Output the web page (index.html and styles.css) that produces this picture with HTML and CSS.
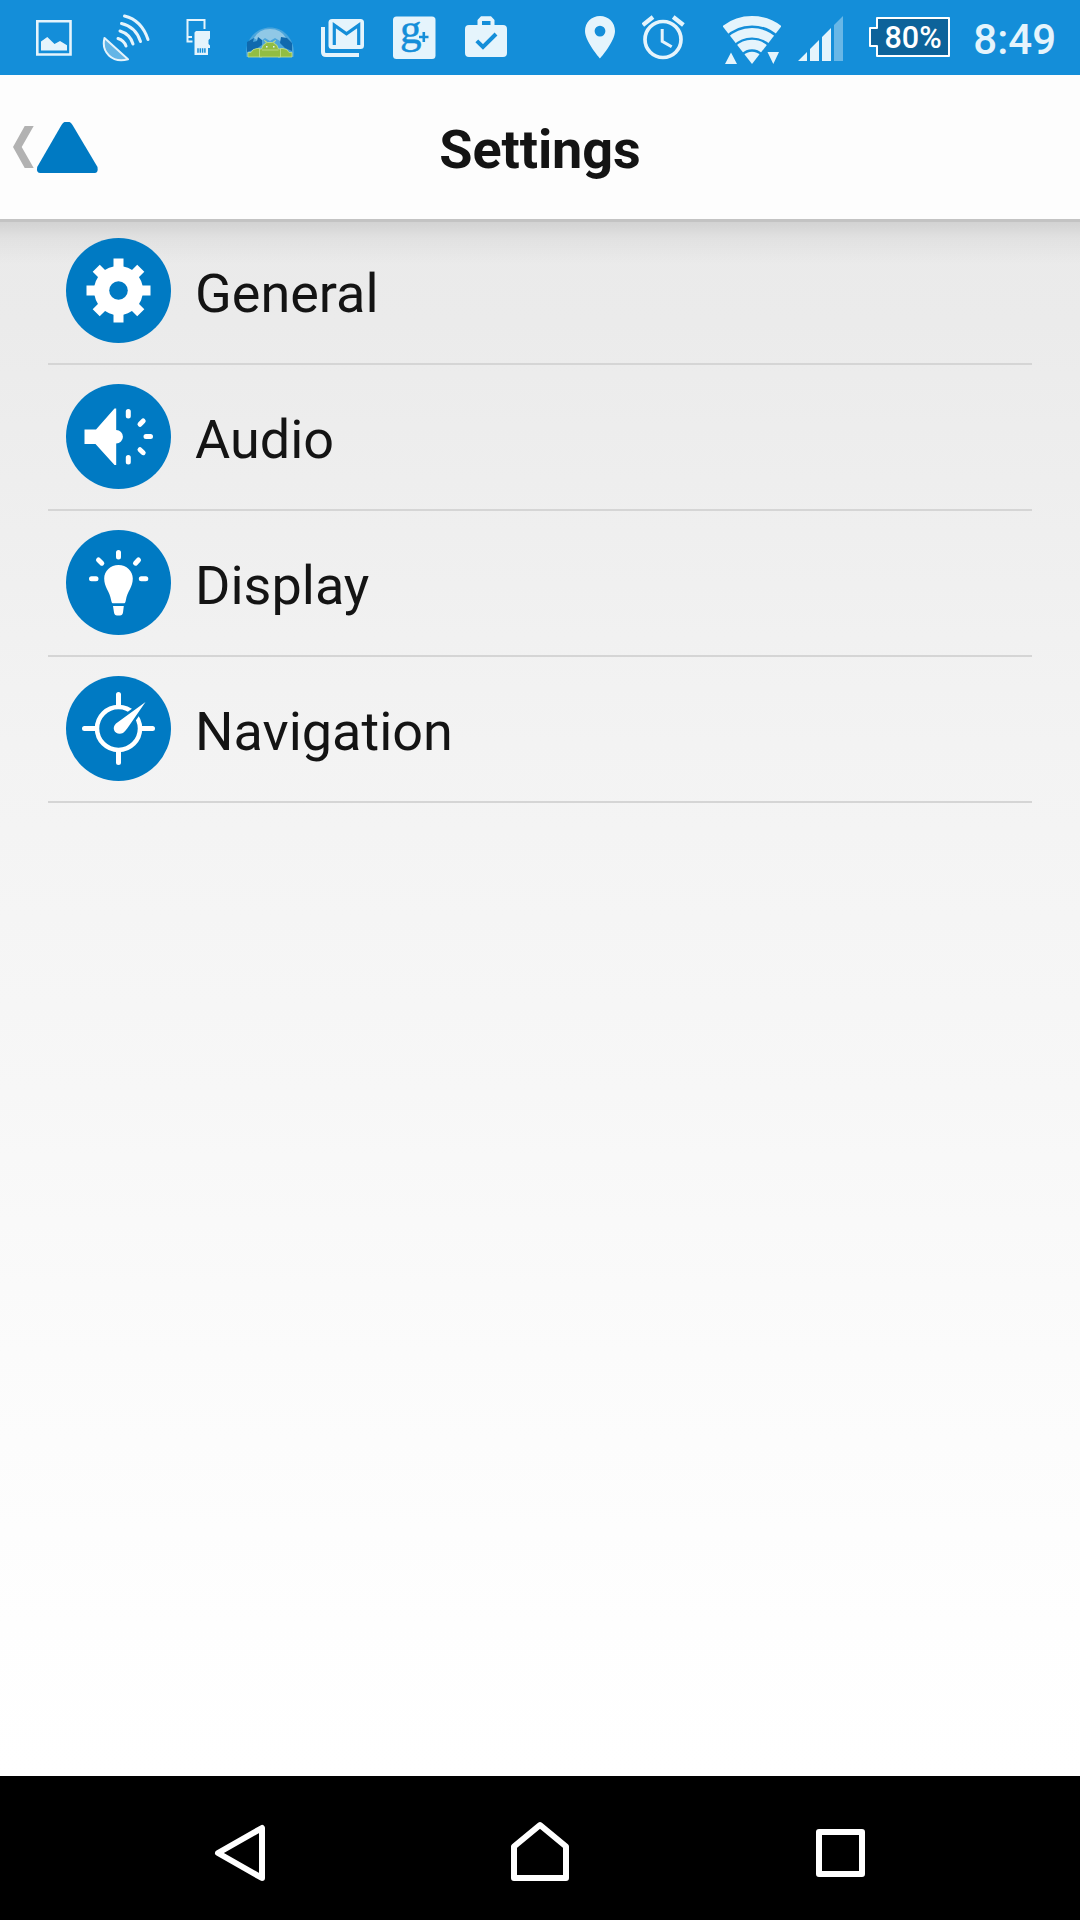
FILE: index.html
```html
<!DOCTYPE html>
<html lang="en">
<head>
<meta charset="utf-8">
<title>Settings</title>
<link rel="stylesheet" href="styles.css">
</head>
<body>
<div class="screen">
  <div class="status-bar">
    <svg class="photo" width="36" height="75" viewBox="36 0 36 75"><path fill="none" stroke="currentColor" stroke-width="2.6" d="M37.300 21.300h33.200v33.200H37.300z"/><path fill="currentColor" d="M41 50.500V41.500L47.300 37l7.200 7 5.500-3 7 4.200v5.300z"/></svg>
    <svg class="dish" width="49" height="75" viewBox="101 0 49 75"><g fill="none" stroke="currentColor" stroke-width="3"><path stroke-width="2" fill="currentColor" fill-opacity=".38" stroke-linejoin="round" d="M104.500 38C101 52 112 63.500 128 59.300Z"/><path stroke-linecap="round" d="M118 38.500q6 2 8 7.500M120 31q10 3 13 13M121.500 23.500q14 3 19 18M124.500 16q17 4 23.500 23.500"/></g></svg>
    <svg class="card" width="24" height="75" viewBox="186 0 24 75"><path fill="none" stroke="currentColor" stroke-width="2" d="M204.500 29v-9h-17v21.500h5M188 37h4"/><path fill="currentColor" d="M196 31h14v7.500l-1.500 1.500v4l1.500 1.500V48h-2v7h-13.500V32.500z"/><path stroke="#148ed9" stroke-width="1.500" d="M198 48.300v4.400M200.300 48.300v4.400M202.600 48.300v4.400M204.900 48.300v4.400"/></svg>
    <svg class="droids" width="48" height="75" viewBox="246 0 48 75"><path fill="#4aa5dc" d="M246.500 57C244 40 256 27.500 270 27.500S296 40 293.500 57z"/><path fill="#90c8e6" d="M254 38q5-9 16-9 11 0 16 9l-6 3-5-3-5 3-5-3-5 4z"/><path fill="#0f69ae" d="M247 52v-10l7-4-1 4 4-1 1-4 4 3v5l-6 4zM280 43l1-6 6 1 5 5v8l-7-3z"/><g fill="#92bd42" stroke="#c3df92" stroke-width=".8"><path d="M248 57v-4.500h3q1-3.500 6-4l3 0 2 8.500zM292 57v-4.500h-3q-1-3.500-6-4l-3 0-2 8.500z"/><path d="M259.500 57v-8h2q1-5 5-6l-2-2.500 3 2h5l3-2-2 2.500q4 1 5 6h2v8z"/></g><path fill="#e5f4fc" d="M266 46h1.500v1.500H266zm7 0h1.500v1.500H273z"/><path stroke="#c3df92" stroke-width=".8" d="M262 50h16.500"/></svg>
    <svg class="mail" width="43" height="75" viewBox="321 0 43 75"><path fill="none" stroke="currentColor" stroke-width="4" d="M323 27v25q0 3 3 3h33"/><rect x="328.500" y="19" width="35.500" height="30" rx="3.500" fill="currentColor"/><path fill="none" stroke="#148ed9" stroke-width="3.200" d="M334.300 45V25.200L346.500 33.800 358.700 25.200V45"/></svg>
    <svg class="plus" width="43" height="75" viewBox="393 0 43 75"><rect x="393" y="16.500" width="42.500" height="42.500" rx="3.500" fill="currentColor"/><text class="plus-g" x="400" y="43">g</text><path stroke="#148ed9" stroke-width="2.600" d="M419 37h9.500M423.800 32v10"/></svg>
    <svg class="bag" width="42" height="75" viewBox="465 0 42 75"><path fill="currentColor" fill-rule="evenodd" d="M469 25h8.500v-5l3.500-3.700h10l3.500 3.700v5h8.500q4 0 4 4v24q0 4-4 4h-34q-4 0-4-4V29q0-4 4-4zm13 0h8.500v-4H482z"/><path fill="none" stroke="#148ed9" stroke-width="4" d="m476.800 40.800 6.200 6.200 13-13"/></svg>
    <svg class="pin" width="30" height="75" viewBox="585 0 30 75"><path fill="currentColor" fill-rule="evenodd" d="M600 16c-8.500 0-15 6.500-15 15 0 10.500 15 27.500 15 27.500S615 41.500 615 31c0-8.500-6.500-15-15-15zm0 9.700a5.400 5.400 0 1 1 0 10.800 5.400 5.400 0 0 1 0-10.800z"/></svg>
    <svg class="alarm" width="43" height="75" viewBox="642 0 43 75"><g fill="none" stroke="currentColor"><circle cx="663" cy="39.500" r="18" stroke-width="3.700"/><path stroke-width="3" d="M662.200 29v12.300l9.500 5.500"/><path stroke-width="4.300" d="m642.800 25 10.200-8M673.200 17l10.200 8"/></g></svg>
    <svg class="wifi" width="58" height="75" viewBox="723 0 58 75"><clipPath id="wedge"><path d="M752 64 711.500 12h81z"/></clipPath><g clip-path="url(#wedge)" fill="none" stroke="currentColor" stroke-width="9.400"><circle cx="752" cy="64" r="43.300"/><circle cx="752" cy="64" r="31.200"/><circle cx="752" cy="64" r="19.500"/><circle cx="752" cy="64" r="12.300" fill="currentColor" stroke="none"/></g><path fill="currentColor" d="m725 64 6-11.500 6 11.500zM767.500 52H779l-5.700 12z"/></svg>
    <svg class="signal" width="45" height="75" viewBox="798 0 45 75"><path fill="currentColor" d="m798 61 9-9v9zm12 0V49l9-9v21zm12 0V37l9-9v33z"/><path fill="currentColor" opacity=".4" d="M834 61V25l9-9v45z"/></svg>
    <svg class="battery" width="81" height="75" viewBox="869 0 81 75"><path fill="#0d639a" stroke="#fff" stroke-width="2" stroke-linejoin="round" d="M877 18h72v38h-72V46h-7V28h7z"/><text class="battery-level" x="884.500" y="48">80%</text></svg>
    <span class="clock">8:49</span>
  </div>

  <header class="header">
    <svg class="back" width="100" height="144" viewBox="0 75 100 144"><path fill="#b2b2b2" d="M24.700 126h9L21.700 147l12 21h-9L13 147z"/><path fill="#007ac3" d="M64.500 122h5q1.500.6 3 3l25 42q1 6-3 6h-54q-4.500 0-3.300-6L61.500 125q1.500-2.500 3-3z"/></svg>
    <h1 class="title">Settings</h1>
  </header>

  <main class="content">
    <ul class="list">
      <li class="row">
        <svg class="row-icon" viewBox="0 0 105 105"><circle class="disc" cx="52.500" cy="52.500" r="52.500"/><g fill="#fff"><circle cx="52.500" cy="52.500" r="24.500"/><path d="M47.500 20.500h10v64h-10zM20.500 47.500h64v10h-64z"/><path d="M47.500 21h10v63h-10zM21 47.500h63v10H21z" transform="rotate(45 52.500 52.500)"/></g><circle class="disc" cx="52.500" cy="52.500" r="9.300"/></svg>
        <span>General</span>
      </li>
      <li class="row">
        <svg class="row-icon" viewBox="0 0 105 105"><circle class="disc" cx="52.500" cy="52.500" r="52.500"/><path fill="#fff" d="M18.500 45.500h11.500L48.500 24.500h1.700V46a6.600 6.600 0 0 1 0 13.500V81h-1.700L29.500 60h-11z"/><path class="ray" d="M62.300 27.500v4.500M62.300 73.500V78M80 52.500h4.500M74 40.300l3.200-3.300M74 65.700l3.200 3"/></svg>
        <span>Audio</span>
      </li>
      <li class="row">
        <svg class="row-icon" viewBox="0 0 105 105"><circle class="disc" cx="52.500" cy="52.500" r="52.500"/><path fill="#fff" d="M52.500 35c-8 0-14.300 6-14.300 13.500 0 9 5.300 12 7 22 .4 2 1 2.800 2 2.800h10.600c1 0 1.700-.8 2-2.800 1.700-10 7-13 7-22C66.800 41 60.500 35 52.500 35zM47 76h10.800l-.8 6.500q-.5 3-3 3h-3q-2.500 0-3-3z"/><path class="ray" d="M52.500 22.500V27M32.500 30l3.300 3.200M69.500 33.200l3-3.200M25.500 48.700H30M75.300 48.700h4.500"/></svg>
        <span>Display</span>
      </li>
      <li class="row">
        <svg class="row-icon" viewBox="0 0 105 105"><circle class="disc" cx="52.500" cy="52.500" r="52.500"/><circle cx="52.500" cy="52.500" r="21.500" fill="none" stroke="#fff" stroke-width="4.500"/><path class="ray" d="M52.500 18.500V30M52.500 75v11.500M18.500 52.500H30M75 52.500h11.500"/><path fill="#fff" stroke="#007ac3" stroke-width="5" paint-order="stroke" d="M79.500 26 50 47.500c-5.500 5.500 0 12.500 7 9.500 3-2 5.500-6.500 8-10z"/></svg>
        <span>Navigation</span>
      </li>
    </ul>
  </main>

  <nav class="nav-bar">
    <svg width="60" height="144" viewBox="210 1776 60 144"><path d="M262 1828v50l-44-25z"/></svg>
    <svg width="60" height="144" viewBox="510 1776 60 144"><path d="M514 1878v-31.500l26-21.500 26 21.500V1878z"/></svg>
    <svg width="60" height="144" viewBox="810 1776 60 144"><path d="M819 1832h43v42h-43z"/></svg>
  </nav>
</div>
</body>
</html>
```
FILE: styles.css
```css
* { box-sizing: border-box; }

body {
  margin: 0;
  font-family: Roboto, sans-serif;
  color: #141414;
}

svg { display: block; flex: none; }

.screen {
  display: flex;
  flex-direction: column;
  width: 1080px;
  height: 1920px;
  overflow: hidden;
}

.status-bar {
  display: flex;
  flex: none;
  height: 75px;
  padding: 0 24px 0 36px;
  background: #148ed9;
  color: #e5f4fc;
}

.dish,
.plus,
.bag { margin-left: 29px; }

.card,
.droids { margin-left: 36px; }

.mail,
.alarm { margin-left: 27px; }

.pin { margin-left: 78px; }
.wifi { margin-left: 38px; }
.signal { margin-left: 17px; }
.battery { margin-left: 26px; }

.plus { margin-right: -1px; }
.bag { margin-left: 30px; }

.clock {
  margin-left: auto;
  font-size: 42px;
  font-weight: 500;
  line-height: 79px;
}

.battery-level {
  font-size: 30.5px;
  font-weight: 500;
  fill: #fff;
}

.plus-g {
  font-family: "Liberation Serif", serif;
  font-size: 43px;
  fill: #148ed9;
  stroke: #148ed9;
  stroke-width: .5px;
}

.header {
  display: grid;
  grid-template-columns: 100px 1fr 100px;
  flex: none;
  height: 144px;
  background: #fdfdfd;
}

.title {
  margin: 0;
  font-size: 54px;
  font-weight: 700;
  letter-spacing: -.1px;
  line-height: 149px;
  text-align: center;
}

.content {
  flex: 1;
  padding: 0 48px;
  border-top: 3px solid #c3c3c3;
  background:
    linear-gradient(rgba(0, 0, 0, .1), rgba(0, 0, 0, .04) 16px, transparent 42px),
    linear-gradient(#eaeaea, #ebebeb 100px, #f3f3f3 520px, #f7f7f7 870px, #fbfbfb 1130px, #fefefe 1400px, #fff);
}

.list {
  margin: -3px 0 0;
  padding: 0;
  list-style: none;
}

.row {
  display: flex;
  gap: 24px;
  height: 146px;
  padding: 19px 18px 0;
  border-bottom: 2px solid #d5d5d5;
  font-size: 54px;
  line-height: 112px;
}

.row-icon {
  width: 105px;
  height: 105px;
}

.disc { fill: #007ac3; }

.ray {
  fill: none;
  stroke: #fff;
  stroke-width: 5;
  stroke-linecap: round;
}

.nav-bar {
  display: flex;
  flex: none;
  justify-content: space-between;
  height: 144px;
  padding: 0 210px;
  background: #000;
}

.nav-bar path {
  fill: none;
  stroke: #fff;
  stroke-width: 6;
  stroke-linejoin: round;
}
```
